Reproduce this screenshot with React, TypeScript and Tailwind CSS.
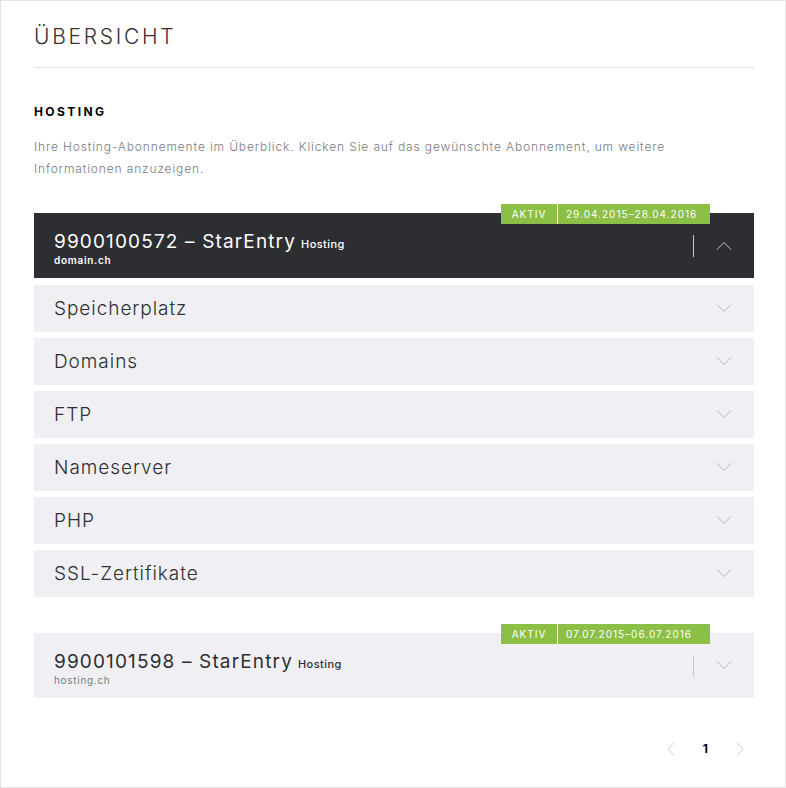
import { FC } from 'react';

const Chevron: FC<{ up?: boolean; className?: string }> = ({ up, className }) => (
  <svg width="16" height="9" viewBox="0 0 16 9" className={className} fill="none" stroke="currentColor" strokeWidth="1">
    {up ? <polyline points="1,8.5 8,1.5 15,8.5" /> : <polyline points="1,0.5 8,7.5 15,0.5" />}
  </svg>
);

const Badge: FC<{ dates: string }> = ({ dates }) => (
  <div className="absolute -top-[9px] right-[44px] flex h-5 text-[10px] tracking-[0.1em] text-white">
    <div className="flex w-[56px] items-center justify-center bg-[#8cbf45]">AKTIV</div>
    <div className="w-px bg-white" />
    <div className="flex w-[152px] items-center bg-[#8cbf45] pl-[8px]">{dates}</div>
  </div>
);

const SubscriptionHead: FC<{
  id: string;
  domain: string;
  dates: string;
  open?: boolean;
}> = ({ id, domain, dates, open }) => (
  <div
    className={`relative flex h-[65px] items-center pl-5 pr-[22px] ${
      open ? 'bg-[#2d2e32] text-white' : 'bg-[#f0f0f4] text-[#2d2e32]'
    }`}
  >
    <Badge dates={dates} />
    <div className="mt-[6px] flex-1">
      <div className="flex items-baseline leading-[20px]">
        <span className="text-[19px] tracking-[0.06em]">{id} – StarEntry</span>
        <span className="ml-[5px] text-[11px] font-medium tracking-[0.04em]">Hosting</span>
      </div>
      <div
        className={`text-[10px] leading-[12px] tracking-[0.07em] ${
          open ? 'font-semibold text-white' : 'text-[#7a7a7e]'
        }`}
      >
        {domain}
      </div>
    </div>
    <div className="h-[22px] w-px bg-[#c8c8cc]" />
    <Chevron up={open} className={`ml-[22px] ${open ? 'text-[#c8c8cc]' : 'text-[#b5b5ba]'}`} />
  </div>
);

export default function App() {
  const sections = ['Speicherplatz', 'Domains', 'FTP', 'Nameserver', 'PHP', 'SSL-Zertifikate'];

  return (
    <div className="h-[788px] w-[786px] border border-[#e4e4e4] bg-white font-['Inter',sans-serif] text-[#2d2e32]">
      <div className="ml-[33px] mr-[31px]">
        <h1 className="border-b border-[#e3e3e6] pt-[22px] pb-[17px] text-[21px] font-light leading-[27px] tracking-[0.13em] text-[#3a3033]">
          ÜBERSICHT
        </h1>

        <h2 className="mt-[37px] text-[12px] font-bold leading-[14px] tracking-[0.2em] text-black">HOSTING</h2>
        <p className="mt-[17px] text-[12px] font-light leading-[22px] tracking-[0.072em] text-[#7b7b80]">
          Ihre Hosting-Abonnemente im Überblick. Klicken Sie auf das gewünschte Abonnement, um weitere Informationen anzuzeigen.
        </p>

        <div className="mt-[33px]">
          <SubscriptionHead id="9900100572" domain="domain.ch" dates="29.04.2015–28.04.2016" open />
          <div className="mt-[7px] flex flex-col gap-[6px]">
            {sections.map((s) => (
              <div key={s} className="flex h-[47px] items-center justify-between bg-[#f0f0f4] pl-5 pr-[22px]">
                <span className="mt-[2px] text-[19px] font-light tracking-[0.05em] text-[#2d2e32]">{s}</span>
                <Chevron className="text-[#b5b5ba]" />
              </div>
            ))}
          </div>
        </div>

        <div className="mt-[36px]">
          <SubscriptionHead id="9900101598" domain="hosting.ch" dates="07.07.2015–06.07.2016" />
        </div>

        <div className="mt-[42px] flex items-center justify-end gap-[28px] pr-[10px] text-[12px]">
          <svg width="8" height="14" viewBox="0 0 8 14" fill="none" stroke="#d0d0d4" strokeWidth="1">
            <polyline points="7,0.5 1,7 7,13.5" />
          </svg>
          <span className="font-bold text-black">1</span>
          <svg width="8" height="14" viewBox="0 0 8 14" fill="none" stroke="#d0d0d4" strokeWidth="1">
            <polyline points="1,0.5 7,7 1,13.5" />
          </svg>
        </div>
      </div>
    </div>
  );
}
